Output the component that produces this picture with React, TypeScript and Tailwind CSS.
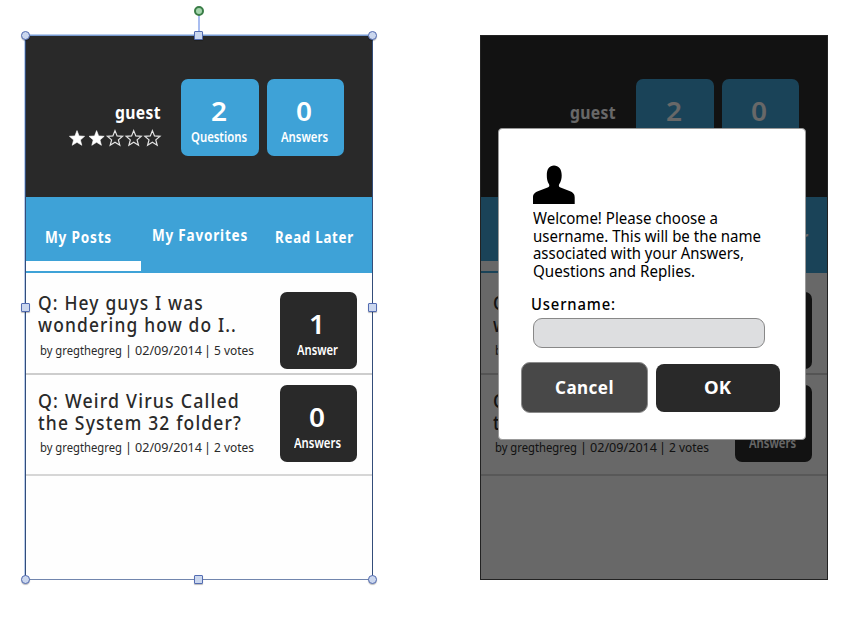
import { useLayoutEffect, useRef, useState, type ReactNode } from "react";

/** One line of text, condensed or widened to fill the width of its box. */
function Line({ className, children }: { className: string; children: ReactNode }) {
  const box = useRef<HTMLDivElement>(null);
  const text = useRef<HTMLSpanElement>(null);
  const [scale, setScale] = useState(1);
  useLayoutEffect(() => {
    if (box.current && text.current && text.current.offsetWidth > 0) {
      setScale(box.current.clientWidth / text.current.getBoundingClientRect().width);
    }
  }, []);
  return (
    <div ref={box} className={`shrink-0 whitespace-nowrap ${className}`}>
      <span ref={text} className="inline-block origin-left align-top" style={{ transform: `scaleX(${scale})` }}>
        {children}
      </span>
    </div>
  );
}

function Tile({ count, label, color, labelWidth }: { count: string; label: string; color: string; labelWidth: string }) {
  return (
    <div className={`flex h-[77px] w-[77.5px] shrink-0 flex-col items-center rounded-[7px] pt-[17.5px] text-white ${color}`}>
      <Line className="mr-[2px] w-[16px] text-[27.5px] leading-[28px] font-semibold">{count}</Line>
      <Line className={`mt-[4.5px] mr-px text-[13.5px] leading-4 font-semibold ${labelWidth}`}>{label}</Line>
    </div>
  );
}

const STAR = "M8 0.6 L10.1 5.9 L15.6 6.3 L11.4 9.9 L12.8 15.3 L8 12.3 L3.2 15.3 L4.6 9.9 L0.4 6.3 L5.9 5.9 Z";

function Stars() {
  return (
    <svg className="mt-[7px] mr-[0.5px] h-4 w-[92px] overflow-visible" viewBox="0 0 92 16">
      {[0, 19.6, 38, 56.7, 75.4].map((x, i) => (
        <path
          key={x}
          d={STAR}
          transform={`translate(${x} 0)`}
          fill={i < 2 ? "#fff" : "none"}
          stroke={i < 2 ? "#fff" : "#e4e4e4"}
          strokeWidth={i < 2 ? "0.6" : "1.2"}
        />
      ))}
    </svg>
  );
}

type PostProps = {
  title: [string, string];
  widths: [string, string];
  votes: string;
  count: string;
  label: string;
  labelWidth: string;
  className: string;
  tileOffset: string;
  metaGap: string;
};

function Post({ title, widths, votes, count, label, labelWidth, className, tileOffset, metaGap }: PostProps) {
  return (
    <div className={`flex justify-between pr-[15px] pl-3 text-[#2a2a2a] ${className}`}>
      <div className="flex flex-col">
        <Line className={`text-[19.5px] leading-[22px] font-medium tracking-[1.3px] ${widths[0]}`}>{title[0]}</Line>
        <Line className={`text-[19.5px] leading-[22px] font-medium tracking-[1.3px] ${widths[1]}`}>{title[1]}</Line>
        <div className={`ml-[2px] flex text-[13px] leading-4 ${metaGap}`}>
          <Line className="w-[82px]">by gregthegreg</Line>
          <Line className="ml-[3px] w-[7px]">|</Line>
          <Line className="ml-[2.5px] w-[67px]">02/09/2014</Line>
          <Line className="ml-[2.5px] w-[7px]">|</Line>
          <Line className="ml-[2.5px] w-[40px]">{votes}</Line>
        </div>
      </div>
      <div className={tileOffset}>
        <Tile count={count} label={label} color="bg-[#292929]" labelWidth={labelWidth} />
      </div>
    </div>
  );
}

function Phone({ frame, children }: { frame: string; children?: ReactNode }) {
  return (
    <section className={`relative h-[545px] w-[348px] shrink-0 border bg-[#fefefe] ${frame}`}>
      <header className="flex h-[161px] bg-[#292929] pt-[43px] pr-7 pl-[43px] text-white">
        <div className="flex w-[92px] flex-col items-end pt-[22px]">
          <Line className="w-[46px] text-[17.5px] leading-[22px] font-bold tracking-[0.4px]">guest</Line>
          <Stars />
        </div>
        <div className="ml-5 flex gap-2">
          <Tile count="2" label="Questions" color="bg-[#3ea2d7]" labelWidth="w-[56px]" />
          <Tile count="0" label="Answers" color="bg-[#3ea2d7]" labelWidth="w-[47px]" />
        </div>
      </header>
      <nav className="h-[76px] bg-[#3ea2d7] text-white">
        <div className="flex h-16 pt-[30px] pl-[19px] text-[15.5px] leading-5 font-bold tracking-[0.9px]">
          <Line className="w-[67px]">My Posts</Line>
          <Line className="-mt-[2px] ml-[40px] w-[95.5px]">My Favorites</Line>
          <Line className="ml-[27.5px] w-[78.5px]">Read Later</Line>
        </div>
        <div className="h-[10px] w-[115px] bg-white" />
      </nav>
      <Post
        title={["Q: Hey guys I was", "wondering how do I.."]}
        widths={["w-[166px]", "w-[198.5px]"]}
        votes="5 votes"
        count="1"
        label="Answer"
        labelWidth="w-[41px]"
        className="h-[102px] border-b-[2.5px] border-[#cdcdcd] pt-[19px]"
        tileOffset=""
        metaGap="mt-[6px]"
      />
      <Post
        title={["Q: Weird Virus Called", "the System 32 folder?"]}
        widths={["w-[202px]", "w-[204px]"]}
        votes="2 votes"
        count="0"
        label="Answers"
        labelWidth="w-[47px]"
        className="h-[101px] border-b-2 border-[#d6d6d6] pt-[15px]"
        tileOffset="-mt-[5px]"
        metaGap="mt-[5px]"
      />
      {children}
    </section>
  );
}

function Handle({ className }: { className: string }) {
  return (
    <i className={`absolute size-[9px] border border-[#536cb2] bg-[#cbd7ee] shadow-[0_1px_1px_#0004] ${className}`} />
  );
}

function SelectionHandles() {
  return (
    <>
      <i className="absolute -top-[21px] left-[172px] h-5 w-[1.5px] bg-[#a9bdf0]" />
      <i className="absolute -top-[30px] left-[168px] size-[10px] rounded-full border-2 border-[#3a7d47] bg-[#a5d5ad]" />
      <Handle className="-top-[5px] -left-[5px] rounded-full" />
      <Handle className="-top-[5px] left-[168px] rounded-[1px]" />
      <Handle className="-top-[5px] -right-[5px] rounded-full" />
      <Handle className="top-[267px] -left-[5px] rounded-[1px]" />
      <Handle className="top-[267px] -right-[5px] rounded-[1px]" />
      <Handle className="-bottom-[5px] -left-[5px] rounded-full" />
      <Handle className="-bottom-[5px] left-[168px] rounded-[1px]" />
      <Handle className="-right-[5px] -bottom-[5px] rounded-full" />
    </>
  );
}

function UsernameDialog() {
  return (
    <div className="absolute inset-0 bg-[#040404]/60">
      <div className="absolute top-[92px] left-[17px] h-[312px] w-[308px] rounded-[4px] border border-[#999] bg-white pt-[36px] pl-[34px] text-black">
        <svg className="h-[39px] w-[42px]" viewBox="0 0 42 39">
          <path d="M0 39V32.5C0 28.8 2 27.4 5.5 26L14.6 22.5C16.3 21.8 16.7 20.8 16 19.2C14.3 16.6 13.8 13.7 13.8 10.2C13.8 4 16.5 .6 21 .6S28.7 4 28.7 10.2C28.7 13.7 28 16.6 26.2 19.2C25.5 20.8 25.9 21.8 27.5 22.5L36.5 26C40 27.4 41.7 28.8 41.7 32.5V39Z" />
        </svg>
        <div className="mt-[6px] text-[15.5px] leading-[17.6px]">
          <Line className="w-[185px]">Welcome! Please choose a</Line>
          <Line className="w-[228px]">username. This will be the name</Line>
          <Line className="w-[211px]">associated with your Answers,</Line>
          <Line className="w-[162px]">Questions and Replies.</Line>
        </div>
        <Line className="mt-[14px] -ml-[2px] w-[85px] text-[15.5px] leading-5 font-medium tracking-[0.9px]">Username:</Line>
        <div className="mt-[3.5px] -ml-[0.5px] h-[30px] w-[232px] rounded-[9px] border border-[#888] bg-[#dddee0]" />
        <div className="mt-[14.5px] -ml-[12px] flex items-center gap-2 text-[18px] leading-6 font-bold text-white">
          <div className="flex h-[51px] w-[127px] items-center justify-center rounded-[9px] border-[1.5px] border-[#8c8c8c] bg-[#484848]">
            <Line className="-mt-[2px] w-[59px] tracking-[0.5px]">Cancel</Line>
          </div>
          <div className="flex h-[48px] w-[124px] items-center justify-center rounded-[8px] bg-[#292929]">
            <Line className="-mt-[2px] mr-[2px] w-[27px]">OK</Line>
          </div>
        </div>
      </div>
    </div>
  );
}

export default function App() {
  return (
    <main className="flex h-[634px] w-[864px] gap-[107px] overflow-hidden bg-white pt-[35px] pl-[25px] font-['Noto_Sans',sans-serif]">
      <Phone frame="border-x-[#334d7a] border-t-[#7699cf] border-b-[#7185ad] shadow-[-1px_-1px_0_#b9cdec]">
        <SelectionHandles />
      </Phone>
      <Phone frame="border-[#222]">
        <UsernameDialog />
      </Phone>
    </main>
  );
}
